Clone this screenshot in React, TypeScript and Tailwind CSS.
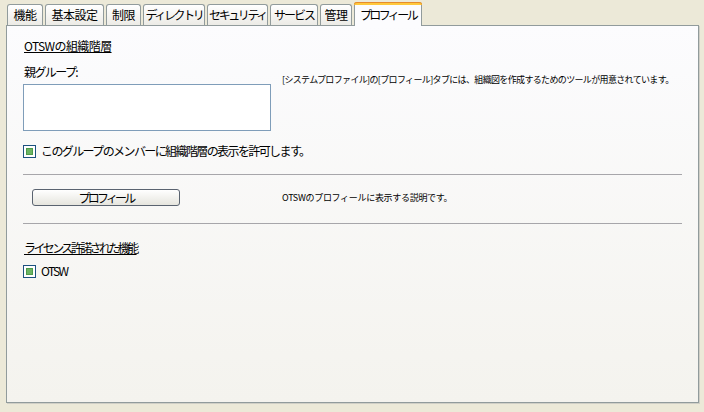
import React from "react";

const tabs = [
  { label: "機能", w: "w-[36px]", tr: "tracking-[-0.5px]" },
  { label: "基本設定", w: "w-[59px]", tr: "tracking-[-0.5px]" },
  { label: "制限", w: "w-[35px]", tr: "tracking-[-0.5px]" },
  { label: "ディレクトリ", w: "w-[62px]", tr: "tracking-[-2.4px]" },
  { label: "セキュリティ", w: "w-[61px]", tr: "tracking-[-2.4px]" },
  { label: "サービス", w: "w-[48px]", tr: "tracking-[-2px]" },
  { label: "管理", w: "w-[32px]", tr: "tracking-[-0.5px]" },
];

const font = "font-['Noto_Sans_CJK_JP','Noto_Sans',sans-serif]";

const Check: React.FC<{ label: string; className?: string }> = ({ label, className }) => (
  <div className={`flex items-center ${className ?? ""}`}>
    <span className="flex h-[13px] w-[13px] items-center justify-center border border-[#1c5180] bg-white">
      <span className="h-[7px] w-[7px] bg-[#6cb464] shadow-[inset_0_0_0_1px_#4f9a4a]" />
    </span>
    <span className="ml-[5px] whitespace-nowrap text-[12px] leading-[14px] tracking-[-1.6px] text-black">{label}</span>
  </div>
);

const Separator = () => <div className="h-[2px] border-t border-[#a7a6aa] border-b-white" />;

export default function App() {
  return (
    <div className={`h-[412px] w-[704px] overflow-hidden bg-[#ece9d8] ${font}`}>
      <div className="flex h-[25px] items-end pl-[7px]">
        {tabs.map((t) => (
          <div
            key={t.label}
            className={`mr-[2px] flex h-[21px] ${t.w} items-center justify-center overflow-hidden whitespace-nowrap rounded-t-[3px] border border-b-0 border-[#919b9c] bg-gradient-to-b from-white to-[#ecebe6] text-[12px] ${t.tr} text-black`}
          >
            {t.label}
          </div>
        ))}
        <div className="relative z-10 -mb-px flex h-[24px] w-[68px] flex-col rounded-t-[3px] border border-b-0 border-[#919b9c] bg-[#fcfcfe]">
          <div className="-mx-px -mt-px h-[3px] rounded-t-[3px] bg-[#ffc83c] shadow-[inset_0_1px_0_#e68b2c]" />
          <div className="flex flex-1 items-center justify-center whitespace-nowrap pb-[2px] text-[12px] tracking-[-2.6px] text-black">
            プロフィール
          </div>
        </div>
      </div>

      <div className="ml-[6px] h-[378px] w-[693px] border border-[#919b9c] bg-gradient-to-b from-[#fcfcfe] to-[#f4f3ee] pl-[16px] pr-[16px] shadow-[1px_1px_0_#d0cfc6]">
        <div className="pt-[13px] text-[12px] leading-[14px] text-black">
          <span className="ml-[1px] underline tracking-[-0.6px]">OTSWの組織階層</span>
        </div>

        <div className="mt-[12px] flex">
          <div className="w-[248px]">
            <div className="ml-[1px] text-[12px] leading-[14px] tracking-[-1.6px] text-black">親グループ:</div>
            <div className="mt-[5px] h-[47px] w-[248px] border border-[#7f9db9] bg-white" />
          </div>
          <div className="ml-[11px] whitespace-nowrap pt-[9px] text-[9px] leading-[12px] tracking-[-0.65px] text-black">
            [システムプロファイル]の[プロフィール]タブには、組織図を作成するためのツールが用意されています。
          </div>
        </div>

        <Check label="このグループのメンバーに組織階層の表示を許可します。" className="mt-[13px]" />

        <div className="mt-[16px]">
          <Separator />
        </div>

        <div className="mt-[13px] flex items-center">
          <button className="ml-[9px] h-[17px] w-[148px] whitespace-nowrap rounded-[3px] border border-[#5a6370] bg-gradient-to-b from-white to-[#e6e5de] text-[12px] leading-[14px] tracking-[-2.8px] text-black">
            プロフィール
          </button>
          <div className="ml-[102px] whitespace-nowrap text-[9px] leading-[12px] tracking-[-0.3px] text-black">
            OTSWのプロフィールに表示する説明です。
          </div>
        </div>

        <div className="mt-[17px]">
          <Separator />
        </div>

        <div className="mt-[16px] text-[12px] leading-[14px] text-black">
          <span className="ml-[1px] whitespace-nowrap underline tracking-[-2.6px]">ライセンス許諾された機能</span>
        </div>

        <Check label="OTSW" className="mt-[9px]" />
      </div>
    </div>
  );
}
